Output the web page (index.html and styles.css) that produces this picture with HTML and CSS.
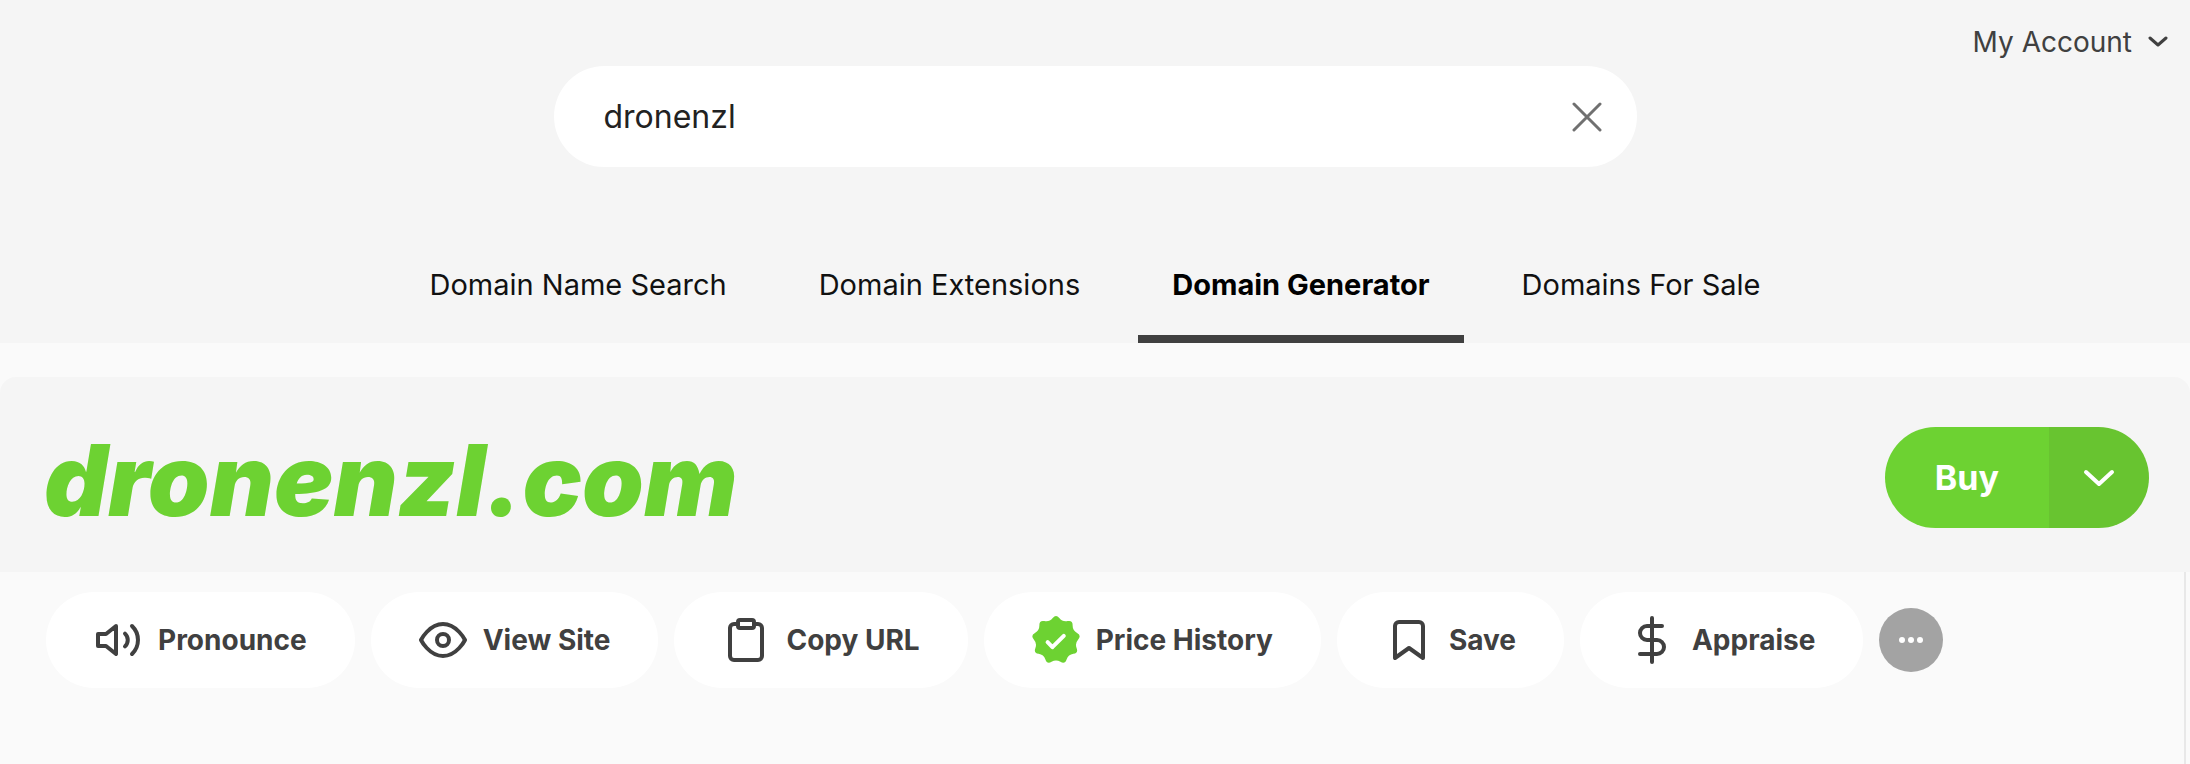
FILE: index.html
```html
<!DOCTYPE html>
<html lang="en">
<head>
<meta charset="utf-8">
<meta name="viewport" content="width=device-width, initial-scale=1">
<title>Domain Generator</title>
<link rel="stylesheet" href="styles.css">
</head>
<body>
<header class="header">
  <div class="account-bar">
    <button class="account" type="button">My Account
      <svg class="account-chevron" viewBox="0 0 20 20" aria-hidden="true"><path d="M2 6l8 7 8-7"/></svg>
    </button>
  </div>
  <form class="search" role="search">
    <input class="search-input" type="text" aria-label="Search domains" value="dronenzl">
    <button class="search-clear" type="button" aria-label="Clear search">
      <svg class="clear-icon" viewBox="0 0 30 30" aria-hidden="true"><path d="M2 2l26 26M28 2L2 28"/></svg>
    </button>
  </form>
  <nav class="tabs" aria-label="Search tools">
    <a class="tab" href="#search">Domain Name Search</a>
    <a class="tab" href="#extensions">Domain Extensions</a>
    <a class="tab tab-active" href="#generator" aria-current="page">Domain Generator</a>
    <a class="tab" href="#sale">Domains For Sale</a>
  </nav>
</header>
<main class="result">
  <section class="result-head">
    <h1 class="domain">dronenzl.com</h1>
    <div class="buy">
      <button class="buy-main" type="button">Buy</button>
      <button class="buy-more" type="button" aria-label="More buying options">
        <svg class="buy-chevron" viewBox="0 0 32 20" aria-hidden="true"><path d="M3 4l13 12L29 4"/></svg>
      </button>
    </div>
  </section>
  <section class="actions">
    <button class="action" type="button">
      <svg class="icon" viewBox="0 0 24 24" aria-hidden="true"><path d="M11 5L6 9H2v6h4l5 4zM15.500 8.800a4.400 4.400 0 0 1 0 6.400M19 5a9.700 9.700 0 0 1 0 14"/></svg>
      Pronounce</button>
    <button class="action" type="button">
      <svg class="icon" viewBox="0 0 24 24" aria-hidden="true"><path d="M1 12s4-8 11-8 11 8 11 8-4 8-11 8-11-8-11-8z"/><circle cx="12" cy="12" r="3"/></svg>
      View Site</button>
    <button class="action" type="button">
      <svg class="icon" viewBox="0 0 24 24" aria-hidden="true"><path d="M16 4h2a2 2 0 0 1 2 2v14a2 2 0 0 1-2 2H6a2 2 0 0 1-2-2V6a2 2 0 0 1 2-2h2"/><rect x="8" y="2" width="8" height="4" rx="1"/></svg>
      Copy URL</button>
    <button class="action" type="button">
      <svg class="icon" viewBox="0 0 24 24" aria-hidden="true"><path class="badge" d="M10.370 1.020Q12-1.020 13.630 1.020Q15.260 3.050 17.820 2.540Q20.370 2.030 20.310 4.640Q20.240 7.240 22.530 8.490Q24.820 9.740 23.100 11.700Q21.380 13.650 22.330 16.080Q23.280 18.510 20.700 18.900Q18.120 19.290 17.290 21.760Q16.450 24.230 14.230 22.880Q12 21.520 9.770 22.880Q7.550 24.230 6.710 21.760Q5.880 19.290 3.300 18.900Q.720 18.510 1.670 16.080Q2.620 13.650 .900 11.700Q-.820 9.740 1.470 8.490Q3.760 7.240 3.690 4.640Q3.630 2.030 6.180 2.540Q8.740 3.050 10.370 1.020z"/><path class="badge-tick" d="M7.800 13.100l2.400 2.500 5.700-5.700"/></svg>
      Price History</button>
    <button class="action" type="button">
      <svg class="icon" viewBox="0 0 24 24" aria-hidden="true"><path d="M19 21l-7-5-7 5V5a2 2 0 0 1 2-2h10a2 2 0 0 1 2 2z"/></svg>
      Save</button>
    <button class="action" type="button">
      <svg class="icon" viewBox="0 0 24 24" aria-hidden="true"><path d="M12 1v22M17 5H9.500a3.500 3.500 0 0 0 0 7h5a3.500 3.500 0 0 1 0 7H6"/></svg>
      Appraise</button>
    <button class="more" type="button" aria-label="More actions">
      <svg class="more-icon" viewBox="0 0 24 8" aria-hidden="true"><circle cx="3" cy="4" r="3"/><circle cx="12" cy="4" r="3"/><circle cx="21" cy="4" r="3"/></svg>
    </button>
  </section>
</main>
</body>
</html>
```
FILE: styles.css
```css
* {
  box-sizing: border-box;
}

body {
  margin: 0;
  min-height: 100vh;
  display: flex;
  flex-direction: column;
  background: #fafafa;
  color: #404040;
  font-family: Inter, "Liberation Sans", sans-serif;
  font-size: 28px;
  line-height: 40px;
}

button,
input {
  margin: 0;
  padding: 0;
  border: 0;
  background: none;
  color: inherit;
  font: inherit;
}

button {
  cursor: pointer;
}

svg {
  display: block;
  flex: none;
  fill: none;
  stroke: currentColor;
  stroke-linecap: round;
  stroke-linejoin: round;
}

.header {
  background: #f5f5f5;
}

.account-bar {
  display: flex;
  justify-content: flex-end;
  height: 66px;
  padding: 22px 22px 0;
}

.account {
  display: flex;
  align-items: center;
  gap: 16px;
  height: 40px;
}

.account-chevron {
  width: 20px;
  height: 20px;
  stroke-width: 3;
}

.search {
  display: flex;
  align-items: center;
  width: 100%;
  max-width: 1083px;
  height: 101px;
  margin: 0 auto;
  padding: 0 35px 0 50px;
  border-radius: 51px;
  background: #fff;
}

.search-input {
  flex: 1;
  min-width: 0;
  height: 100%;
  color: #222;
  font-size: 32px;
  outline: 0;
}

.search-clear {
  color: #707070;
}

.clear-icon {
  width: 30px;
  height: 30px;
  stroke-width: 3;
}

.tabs {
  display: flex;
  justify-content: center;
  gap: 24px;
  margin-top: 68px;
  font-size: 29px;
}

.tab {
  padding: 30px 34px;
  border-bottom: 8px solid transparent;
  color: #111;
  text-decoration: none;
}

.tab-active {
  border-color: #404040;
  color: #000;
  font-weight: 700;
}

.result {
  flex: 1;
  display: flex;
  flex-direction: column;
  margin-top: 34px;
}

.result-head {
  display: flex;
  align-items: center;
  justify-content: space-between;
  padding: 50px 41px 44px 44px;
  border-radius: 16px 16px 0 0;
  background: #f5f5f5;
}

.domain {
  margin: 0;
  padding-top: 6px;
  color: #6dd232;
  font-size: 99px;
  font-style: italic;
  font-weight: 900;
  line-height: 95px;
}

.buy {
  display: flex;
  height: 101px;
  border-radius: 51px;
  overflow: hidden;
  color: #fff;
}

.buy-main {
  padding: 0 50px;
  background: #6dd232;
  font-size: 34px;
  font-weight: 700;
}

.buy-more {
  padding: 0 34px;
  background: #68c430;
}

.buy-chevron {
  width: 32px;
  height: 20px;
  stroke-width: 4;
}

.actions {
  flex: 1;
  display: flex;
  flex-wrap: wrap;
  align-items: center;
  align-content: flex-start;
  gap: 16px;
  margin-right: 4px;
  padding: 20px 46px;
  border-right: 2px solid #e8e8e8;
}

.action {
  display: flex;
  align-items: center;
  gap: 16px;
  height: 96px;
  padding: 0 48px;
  border-radius: 48px;
  background: #fff;
  font-weight: 700;
}

.icon {
  width: 48px;
  height: 48px;
  stroke-width: 2;
}

.badge {
  fill: #6dd232;
  stroke: none;
}

.badge-tick {
  stroke: #fff;
  stroke-width: 2;
}

.more {
  display: flex;
  align-items: center;
  justify-content: center;
  width: 64px;
  height: 64px;
  border-radius: 50%;
  background: #a3a3a3;
  color: #fff;
}

.more-icon {
  width: 24px;
  height: 8px;
  fill: currentColor;
  stroke: none;
}
```
